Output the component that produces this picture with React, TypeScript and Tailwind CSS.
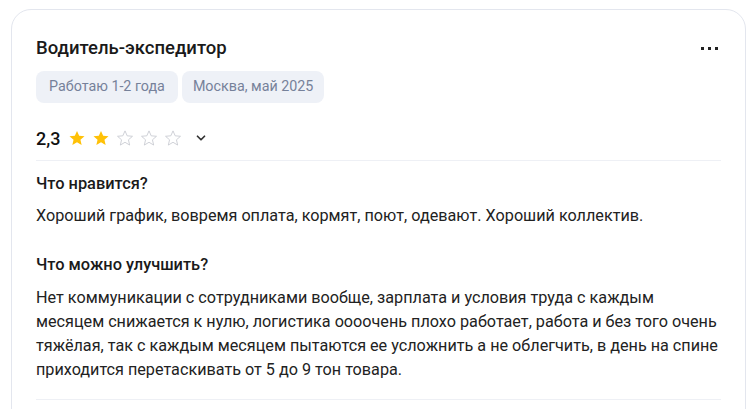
import React from 'react';

const Star = ({ filled }: { filled: boolean }) => (
  <svg width="18" height="18" viewBox="0 0 24 24" className="shrink-0">
    <path
      d="M12 2.5l2.9 6.6 7.1.6-5.4 4.7 1.6 7-6.2-3.7-6.2 3.7 1.6-7L2 9.7l7.1-.6L12 2.5z"
      fill={filled ? '#ffc107' : 'none'}
      stroke={filled ? '#ffc107' : '#c9ccd3'}
      strokeWidth={filled ? 0 : 1.2}
      strokeLinejoin="round"
    />
  </svg>
);

export default function App() {
  const rating = 2;

  return (
    <div className="min-h-screen bg-white pt-[9px] pl-[11px]" style={{ fontFamily: 'Roboto, "Noto Sans", sans-serif' }}>
      <div className="w-[735px] h-[420px] rounded-[20px] border border-[#e3e6ee] bg-white px-6 pt-[26px]">
        {/* header */}
        <div className="flex items-center justify-between">
          <h2 className="text-[18.5px] leading-6 font-medium text-[#1a1a1a]">Водитель-экспедитор</h2>
          <button className="flex items-center gap-1 pr-[3px]">
            <span className="w-[3px] h-[3px] bg-[#222]" />
            <span className="w-[3px] h-[3px] bg-[#222]" />
            <span className="w-[3px] h-[3px] bg-[#222]" />
          </button>
        </div>

        <div className="mt-[11px] flex gap-1">
          <span className="h-8 px-[13px] flex items-center rounded-lg bg-[#eef1f7] text-[14.3px] text-[#76819a]">
            Работаю 1-2 года
          </span>
          <span className="h-8 px-[11px] flex items-center rounded-lg bg-[#eef1f7] text-[14.3px] text-[#76819a]">
            Москва, май 2025
          </span>
        </div>

        {/* rating */}
        <div className="mt-[23px] flex items-center h-6">
          <span className="text-[18px] font-medium text-[#111] mr-[7px]">2,3</span>
          <div className="flex items-center gap-[6px]">
            {[0, 1, 2, 3, 4].map((i) => (
              <Star key={i} filled={i < rating} />
            ))}
          </div>
          <svg width="14" height="14" viewBox="0 0 24 24" className="ml-3" fill="none" stroke="#333" strokeWidth="3" strokeLinecap="round" strokeLinejoin="round">
            <path d="M6 9l6 6 6-6" />
          </svg>
        </div>

        <div className="mt-[10px] border-t border-[#eef0f5]" />

        {/* pros */}
        <h3 className="mt-[11px] text-[16.4px] leading-6 font-medium text-[#1a1a1a]">Что нравится?</h3>
        <p className="mt-2 text-[16.2px] leading-6 text-[#222]">
          Хороший график, вовремя оплата, кормят, поют, одевают. Хороший коллектив.
        </p>

        {/* cons */}
        <h3 className="mt-[25px] text-[16.4px] leading-6 font-medium text-[#1a1a1a]">Что можно улучшить?</h3>
        <p className="mt-[9px] text-[16.2px] leading-6 text-[#222]">
          Нет коммуникации с сотрудниками вообще, зарплата и условия труда с каждым месяцем снижается к нулю,
          логистика оооочень плохо работает, работа и без того очень тяжёлая, так с каждым месяцем пытаются ее
          усложнить а не облегчить, в день на спине приходится перетаскивать от 5 до 9 тон товара.
        </p>

        <div className="mt-[17px] border-t border-[#eef0f5]" />
      </div>
    </div>
  );
}
